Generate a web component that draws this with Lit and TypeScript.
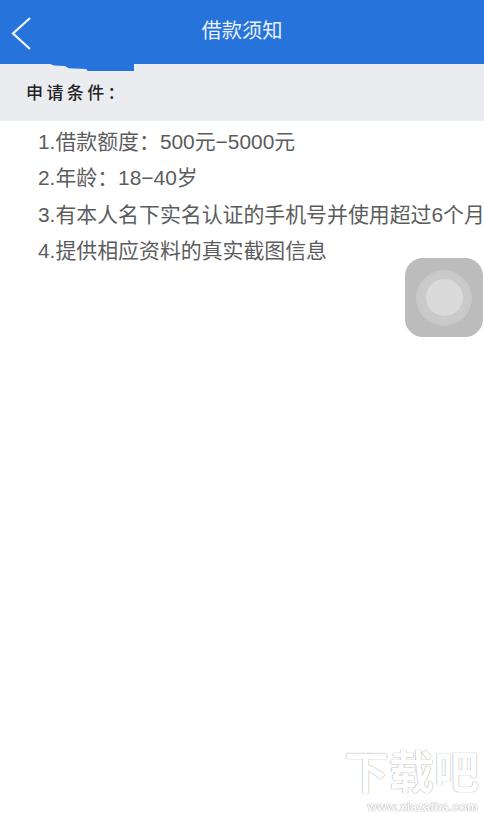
import { LitElement, html, css } from "lit";
import { customElement } from "lit/decorators.js";

const items = [
  "1.借款额度：500元−5000元",
  "2.年龄：18−40岁",
  "3.有本人名下实名认证的手机号并使用超过6个月",
  "4.提供相应资料的真实截图信息",
];

@customElement("app-root")
export class AppRoot extends LitElement {
  static styles = css`
    :host {
      display: block;
      position: relative;
      width: 484px;
      height: 814px;
      overflow: hidden;
      background: #fff;
      font-family: "Liberation Sans", "Noto Sans CJK SC", sans-serif;
    }
    .nav {
      height: 64px;
      background: #2673dc;
      display: flex;
      align-items: center;
      justify-content: center;
      color: #e8f1fc;
      font-size: 20.3px;
      position: relative;
    }
    .title { transform: translateY(-3px); }
    .back { position: absolute; left: 11px; top: 16px; }
    .smear {
      position: absolute; left: 50px; top: 64px; width: 84px; height: 7px;
      background: #2673dc;
      clip-path: polygon(0 0, 100% 0, 100% 100%, 45% 100%, 43% 70%, 22% 60%, 18% 30%, 5% 20%);
    }
    .section {
      height: 57px;
      background: #ebecef;
      display: flex;
      align-items: center;
      padding: 0 0 3px 26px;
      box-sizing: border-box;
      font-size: 17px;
      font-weight: 500;
      letter-spacing: 3.4px;
      color: #222326;
    }
    .list {
      display: flex;
      flex-direction: column;
      gap: 7.4px;
      padding: 6px 0 0 38px;
      font-size: 20.9px;
      line-height: 29px;
      color: #5c5c5e;
      white-space: nowrap;
    }
    .assist {
      position: absolute; left: 405px; top: 258px; width: 78px; height: 79px;
      border-radius: 18px;
      background: #bcbcbc;
      display: flex; align-items: center; justify-content: center;
    }
    .ring {
      width: 56px; height: 56px; border-radius: 50%;
      background: radial-gradient(circle, #cacaca 60%, #bebebe 100%);
      display: flex; align-items: center; justify-content: center;
    }
    .dot { width: 37px; height: 37px; border-radius: 50%; background: #dadada; }
    .mark {
      position: absolute; left: 344px; top: 748px; width: 135px;
      display: flex; flex-direction: column; align-items: flex-end;
      color: #fff;
      text-shadow: 0 0 1px #a8a8a8, 0 0 1px #a8a8a8;
    }
    .mark .cn { font-size: 45px; line-height: 52px; font-weight: 700; white-space: nowrap; }
    .mark .en { font-size: 12px; line-height: 14px; letter-spacing: 0.3px; font-weight: 700; white-space: nowrap; margin-right: 1px; }
  `;

  render() {
    return html`
      <div class="nav">
        <svg class="back" width="22" height="36" viewBox="0 0 22 36" fill="none">
          <path d="M19 2 L2 17.5 L19 33" stroke="#f2f6fd" stroke-width="2.2" />
        </svg>
        <span class="title">借款须知</span>
      </div>
      <div class="smear"></div>
      <div class="section">申请条件：</div>
      <div class="list">${items.map((t) => html`<div>${t}</div>`)}</div>
      <div class="assist"><div class="ring"><div class="dot"></div></div></div>
      <div class="mark">
        <div class="cn">下载吧</div>
        <div class="en">www.xiazaiba.com</div>
      </div>
    `;
  }
}
